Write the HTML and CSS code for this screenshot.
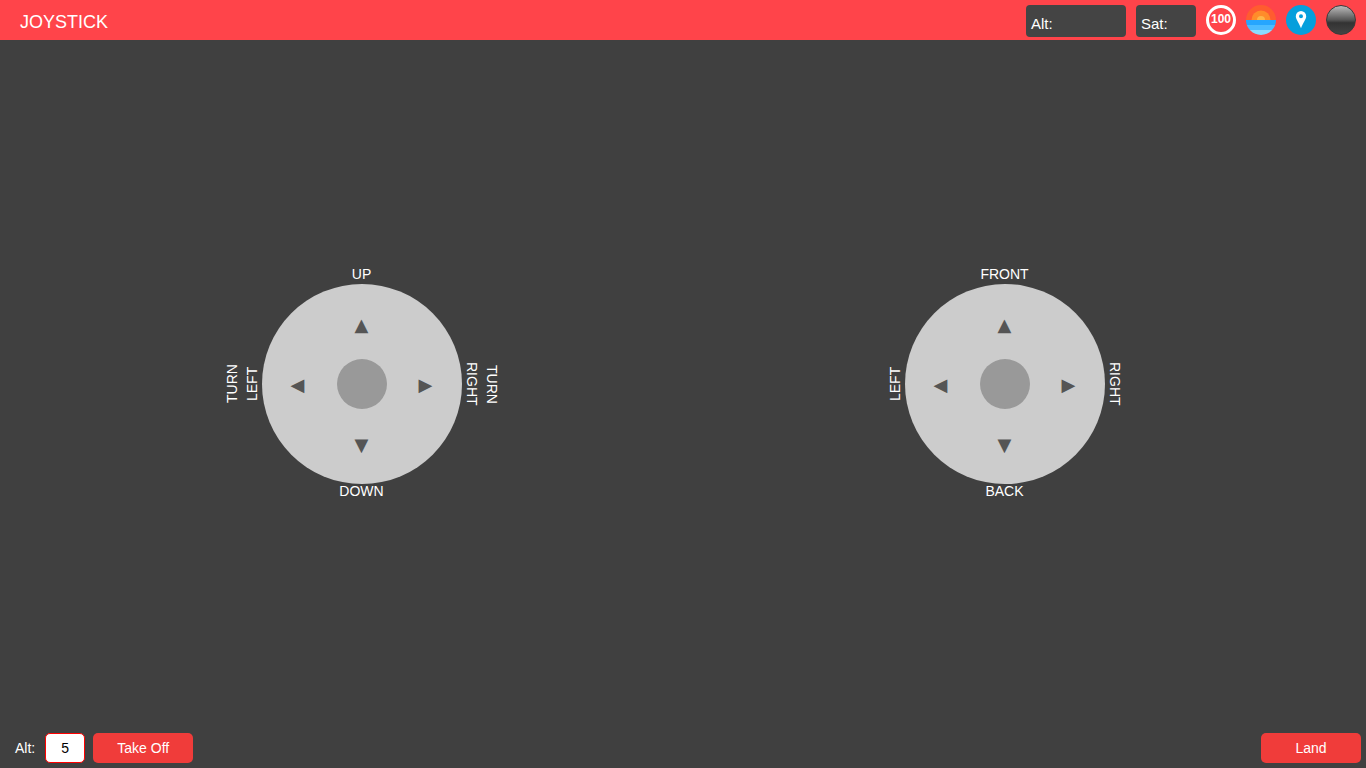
FILE: index.html
```html
<!DOCTYPE html>
<html lang="en">
<head>
<meta charset="utf-8">
<title>Joystick</title>
<link rel="stylesheet" href="styles.css">
</head>
<body>
<header class="topbar">
  <h1 class="title">JOYSTICK</h1>
  <div class="status">
    <div class="readout readout-wide">Alt:</div>
    <div class="readout">Sat:</div>
    <button class="icon-button speed" type="button" aria-label="Speed 100">100</button>
    <button class="icon-button" type="button" aria-label="Horizon">
      <svg viewBox="0 0 30 30">
        <clipPath id="disc"><circle cx="15" cy="15" r="15"/></clipPath>
        <g clip-path="url(#disc)">
          <path fill="#ff5c30" d="M0 0h30v15H0z"/>
          <circle cx="15" cy="15" r="9.500" fill="#ff8c2a"/>
          <circle cx="15" cy="15" r="4" fill="#ffb548"/>
          <path fill="#26a6fe" d="M0 15h30v5H0z"/>
          <path fill="#4cbcff" d="M0 20h30v5H0z"/>
          <path fill="#8cdcff" d="M0 25h30v5H0z"/>
        </g>
      </svg>
    </button>
    <button class="icon-button" type="button" aria-label="Location">
      <svg viewBox="0 0 30 30">
        <circle cx="15" cy="15" r="15" fill="#059fdc"/>
        <path fill="#fff" fill-rule="evenodd" d="M15 6a5.200 5.200 0 0 0-5.200 5.200c0 3 3.400 7 5.200 12 1.800-5 5.200-9 5.200-12A5.200 5.200 0 0 0 15 6zm0 3.200a2 2 0 1 1 0 4 2 2 0 0 1 0-4z"/>
      </svg>
    </button>
    <button class="icon-button orb" type="button" aria-label="Connection"></button>
  </div>
</header>
<main class="stage">
  <section class="joystick" aria-label="Altitude and turn">
    <span class="label label-top">UP</span>
    <span class="label label-left">TURN<br>LEFT</span>
    <div class="pad">
      <button class="arrow up" type="button" aria-label="Up">▲</button>
      <button class="arrow left" type="button" aria-label="Turn left">◀</button>
      <span class="knob"></span>
      <button class="arrow right" type="button" aria-label="Turn right">▶</button>
      <button class="arrow down" type="button" aria-label="Down">▼</button>
    </div>
    <span class="label label-right">TURN<br>RIGHT</span>
    <span class="label label-bottom">DOWN</span>
  </section>
  <section class="joystick" aria-label="Movement">
    <span class="label label-top">FRONT</span>
    <span class="label label-left">LEFT</span>
    <div class="pad">
      <button class="arrow up" type="button" aria-label="Front">▲</button>
      <button class="arrow left" type="button" aria-label="Left">◀</button>
      <span class="knob"></span>
      <button class="arrow right" type="button" aria-label="Right">▶</button>
      <button class="arrow down" type="button" aria-label="Back">▼</button>
    </div>
    <span class="label label-right">RIGHT</span>
    <span class="label label-bottom">BACK</span>
  </section>
</main>
<footer class="controls">
  <label class="alt-label" for="alt">Alt:</label>
  <input class="alt-input" id="alt" type="text" inputmode="numeric" value="5">
  <button class="action" type="button">Take Off</button>
  <button class="action land" type="button">Land</button>
</footer>
</body>
</html>
```
FILE: styles.css
```css
* {
  box-sizing: border-box;
}

body {
  margin: 0;
  min-height: 100vh;
  display: flex;
  flex-direction: column;
  background: #404040;
  color: #fff;
  font-family: "Liberation Sans", Arial, sans-serif;
  font-size: 14px;
}

button,
input {
  font: inherit;
}

button {
  border: 0;
  padding: 0;
  cursor: pointer;
}

.topbar {
  display: flex;
  align-items: center;
  justify-content: space-between;
  height: 40px;
  padding: 0 10px 0 20px;
  background: #ff444a;
}

.title {
  margin: 0;
  padding-top: 4px;
  font-size: 18px;
  font-weight: 400;
  line-height: 20px;
}

.status {
  display: flex;
  gap: 10px;
  padding-top: 2px;
}

.readout {
  width: 60px;
  height: 32px;
  padding: 10px 5px 0;
  border-radius: 4px;
  background: #444;
  font-size: 15px;
  line-height: 18px;
}

.readout-wide {
  width: 100px;
}

.icon-button {
  width: 30px;
  height: 30px;
  border-radius: 50%;
  background: none;
  color: #fff;
}

.icon-button svg {
  display: block;
}

.speed {
  display: flex;
  justify-content: center;
  border: 3px solid #fff;
  font-size: 12px;
  font-weight: 700;
  line-height: 22px;
}

.orb {
  border: 1px solid #3a3a3a;
  background: linear-gradient(#bbb, #555 50%, #333 60%, #444);
}

.stage {
  flex: 1;
  display: grid;
  grid-template-columns: 1fr 1fr;
  place-items: center;
  padding: 0 40px;
}

.joystick {
  display: grid;
  grid-template-columns: 40px auto 40px;
  grid-template-rows: 20px auto 20px;
  grid-template-areas:
    ". top ."
    "left pad right"
    ". bottom .";
}

.label {
  line-height: 20px;
  text-align: center;
}

.label-top {
  grid-area: top;
}

.label-bottom {
  grid-area: bottom;
  line-height: 14px;
}

.label-left,
.label-right {
  writing-mode: vertical-rl;
}

.label-left {
  grid-area: left;
  justify-self: end;
  transform: rotate(180deg);
}

.label-right {
  grid-area: right;
  justify-self: start;
}

.pad {
  grid-area: pad;
  display: grid;
  grid-template-columns: 20px 50px 20px;
  grid-template-rows: 20px 50px 20px;
  grid-template-areas:
    ". up ."
    "left knob right"
    ". down .";
  column-gap: 29px;
  row-gap: 25px;
  place-content: center;
  place-items: center;
  width: 200px;
  height: 200px;
  border-radius: 50%;
  background: #ccc;
}

.knob {
  grid-area: knob;
  width: 50px;
  height: 50px;
  border-radius: 50%;
  background: #999;
}

.arrow {
  width: 20px;
  height: 20px;
  padding-top: 2px;
  background: none;
  color: #555;
  font-family: "DejaVu Sans", sans-serif;
  font-size: 18px;
  line-height: 18px;
}

.up {
  grid-area: up;
}

.left {
  grid-area: left;
}

.right {
  grid-area: right;
}

.down {
  grid-area: down;
}

.controls {
  display: flex;
  align-items: center;
  height: 40px;
  padding: 0 5px 0 15px;
}

.alt-label {
  margin-right: 10px;
}

.alt-input {
  width: 40px;
  height: 30px;
  margin-right: 8px;
  padding: 0;
  border: 1px solid #f00;
  border-radius: 5px;
  background: #fff;
  color: #000;
  text-align: center;
}

.action {
  width: 100px;
  height: 30px;
  border-radius: 5px;
  background: #f03c3a;
  color: #fff;
}

.land {
  margin-left: auto;
}
```
